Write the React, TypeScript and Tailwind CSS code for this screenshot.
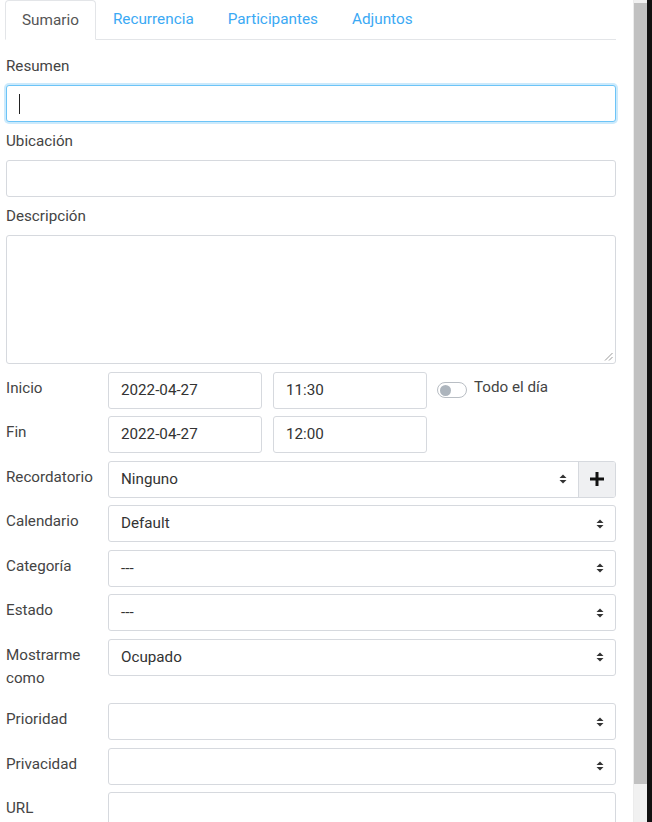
import React from 'react'

// ── Small pieces ──────────────────────────────────────────────────────────────

const font = { fontFamily: 'Roboto, "Liberation Sans", sans-serif' }

function Caret() {
  return (
    <svg width="8" height="12" viewBox="0 0 8 12" className="shrink-0">
      <path d="M4 1.5 L7.5 5 L0.5 5 Z" fill="#333" />
      <path d="M4 10.5 L7.5 7 L0.5 7 Z" fill="#333" />
    </svg>
  )
}

function Field({ children, className = '' }: { children?: React.ReactNode; className?: string }) {
  return (
    <div
      className={`flex h-[37px] items-center rounded-[3px] border border-[#d6d9de] bg-white pl-[12px] text-[15.2px] text-[#333] ${className}`}
    >
      {children}
    </div>
  )
}

function SelectBox({ value = '', addon = false }: { value?: string; addon?: boolean }) {
  return (
    <div className="flex h-[37px] flex-1 overflow-hidden rounded-[3px] border border-[#d6d9de] bg-white">
      <div className="flex flex-1 items-center justify-between pl-[12px] pr-[11px] text-[15.2px] text-[#333]">
        <span>{value}</span>
        <Caret />
      </div>
      {addon && (
        <div className="flex w-[37px] items-center justify-center border-l border-[#d6d9de] bg-[#eff0f2]">
          <svg width="16" height="16" viewBox="0 0 16 16">
            <path d="M8 1 V15 M1 8 H15" stroke="#111" strokeWidth="3" />
          </svg>
        </div>
      )}
    </div>
  )
}

function Row({ label, children }: { label: React.ReactNode; children: React.ReactNode }) {
  return (
    <div className="mb-[7.5px] flex items-start">
      <div className="w-[102px] shrink-0 pb-[6px] pt-[5px] text-[15.2px] leading-[23px] text-[#444]">
        {label}
      </div>
      <div className="flex flex-1 items-center">{children}</div>
    </div>
  )
}

function Label({ children }: { children: React.ReactNode }) {
  return <div className="mb-[7.5px] text-[15.2px] leading-[23px] text-[#444]">{children}</div>
}

// ── Page ──────────────────────────────────────────────────────────────────────

const TABS = ['Sumario', 'Recurrencia', 'Participantes', 'Adjuntos']

export default function App() {
  return (
    <div className="flex h-[822px] w-[652px] overflow-hidden bg-white" style={font}>
      {/* Dialog body */}
      <div className="w-[633px] shrink-0 pr-[17px]">
        {/* Tabs */}
        <div className="ml-[5px] flex h-[40px] border-b border-[#e3e5e8]">
          {TABS.map((t, i) => (
            <div
              key={t}
              className={
                i === 0
                  ? 'mb-[-1px] flex items-center rounded-t-[4px] border border-b-white border-[#e3e5e8] bg-white px-[16px] text-[15.3px] text-[#555]'
                  : 'flex items-center border border-transparent px-[16px] text-[15.3px] text-[#3ba9f4]'
              }
            >
              {t}
            </div>
          ))}
        </div>

        <div className="ml-[6px] pt-[14.5px]">
          <Label>Resumen</Label>
          <div className="mb-[7.5px] flex h-[37px] items-center rounded-[3px] border border-[#6cc4f7] bg-white pl-[12px] shadow-[0_0_0_2px_rgba(108,196,247,0.35)]">
            <span className="h-[20px] w-px bg-[#222]" />
          </div>

          <Label>Ubicación</Label>
          <Field className="mb-[7.5px]" />

          <Label>Descripción</Label>
          <div className="relative mb-[7.5px] h-[129px] rounded-[3px] border border-[#d6d9de] bg-white">
            <svg width="9" height="9" viewBox="0 0 9 9" className="absolute bottom-[2px] right-[2px]">
              <path d="M8.5 1 L1 8.5 M8.5 5 L5 8.5" stroke="#999" strokeWidth="1" />
            </svg>
          </div>

          <Row label="Inicio">
            <Field className="w-[154px]">2022-04-27</Field>
            <Field className="ml-[11px] w-[154px]">11:30</Field>
            <div className="ml-[10px] flex h-[16px] w-[30px] items-center rounded-full border border-[#b9bec4] bg-white pl-[2px]">
              <span className="h-[11px] w-[11px] rounded-full bg-[#adb5bd]" />
            </div>
            <span className="ml-[7px] mt-[-3px] self-start pt-[7px] text-[15.2px] text-[#444]">Todo el día</span>
          </Row>

          <Row label="Fin">
            <Field className="w-[154px]">2022-04-27</Field>
            <Field className="ml-[11px] w-[154px]">12:00</Field>
          </Row>

          <Row label="Recordatorio">
            <SelectBox value="Ninguno" addon />
          </Row>
          <Row label="Calendario">
            <SelectBox value="Default" />
          </Row>
          <Row label="Categoría">
            <SelectBox value="---" />
          </Row>
          <Row label="Estado">
            <SelectBox value="---" />
          </Row>
          <Row
            label={
              <>
                Mostrarme
                <br />
                como
              </>
            }
          >
            <SelectBox value="Ocupado" />
          </Row>
          <Row label="Prioridad">
            <SelectBox />
          </Row>
          <Row label="Privacidad">
            <SelectBox />
          </Row>
          <Row label="URL">
            <Field className="flex-1" />
          </Row>
        </div>
      </div>

      {/* Scrollbar */}
      <div className="flex w-[14px] shrink-0 flex-col border-l border-[#ececec] bg-[#f1f1f1]">
        <div className="mt-[3px] h-[781px] bg-[#c1c1c1]" />
      </div>
      <div className="w-[5px] shrink-0 bg-[#111]" />
    </div>
  )
}
